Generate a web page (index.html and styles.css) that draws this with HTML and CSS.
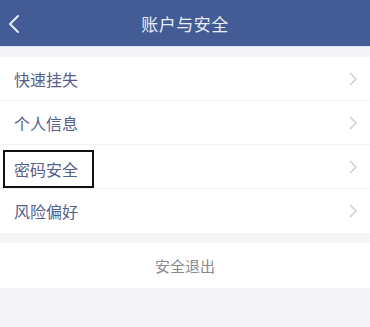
FILE: index.html
```html
<!DOCTYPE html>
<html lang="zh">
<head>
<meta charset="utf-8">
<link rel="stylesheet" href="styles.css">
</head>
<body>
<div class="page">
  <header class="bar">
    <svg class="back" width="12" height="20" viewBox="0 0 12 20"><path d="M10 2 L2 10 L10 18" fill="none" stroke="#e8ecf6" stroke-width="2" stroke-linecap="round" stroke-linejoin="round"/></svg>
    <h1 class="title">账户与安全</h1>
  </header>
  <ul class="list">
    <li class="row"><span class="label">快速挂失</span><svg class="chev" width="8" height="14" viewBox="0 0 8 14"><path d="M1 1 L7 7 L1 13" fill="none" stroke="#c9c9ce" stroke-width="1.3"/></svg></li>
    <li class="row"><span class="label">个人信息</span><svg class="chev" width="8" height="14" viewBox="0 0 8 14"><path d="M1 1 L7 7 L1 13" fill="none" stroke="#c9c9ce" stroke-width="1.3"/></svg></li>
    <li class="row"><span class="label boxed">密码安全</span><svg class="chev" width="8" height="14" viewBox="0 0 8 14"><path d="M1 1 L7 7 L1 13" fill="none" stroke="#c9c9ce" stroke-width="1.3"/></svg></li>
    <li class="row"><span class="label">风险偏好</span><svg class="chev" width="8" height="14" viewBox="0 0 8 14"><path d="M1 1 L7 7 L1 13" fill="none" stroke="#c9c9ce" stroke-width="1.3"/></svg></li>
  </ul>
  <div class="logout">安全退出</div>
</div>
</body>
</html>
```
FILE: styles.css
```css
html, body {
  margin: 0;
  padding: 0;
  background: #f4f4f6;
  font-family: "Noto Sans CJK SC", "Noto Sans", sans-serif;
}
.page {
  width: 370px;
  height: 327px;
  overflow: hidden;
}
.bar {
  height: 46px;
  background: #435c95;
  display: flex;
  align-items: center;
  justify-content: center;
  position: relative;
  border-bottom: 1px solid #dfe3ee;
}
.back {
  position: absolute;
  left: 8px;
  top: 14px;
}
.title {
  margin: 0;
  font-size: 17px;
  font-weight: 400;
  color: #e9edf6;
  letter-spacing: 0.5px;
}
.list {
  list-style: none;
  margin: 10px 0 0;
  padding: 0;
  background: #fff;
}
.row {
  height: 44px;
  display: flex;
  align-items: center;
  justify-content: space-between;
  padding: 0 13px 0 14px;
  border-bottom: 1px solid #f3f3f5;
  box-sizing: border-box;
}
.row:last-child {
  border-bottom: none;
}
.label {
  font-size: 16px;
  color: #53608e;
  line-height: 20px;
}
.boxed {
  outline: 2px solid #111;
  outline-offset: 0;
  padding: 7px 14px 7px 9px;
  margin-left: -9px;
  margin-top: 4px;
}
.logout {
  margin-top: 10px;
  height: 45px;
  background: #fff;
  display: flex;
  align-items: center;
  justify-content: center;
  font-size: 15px;
  color: #8a8a8e;
}
```
